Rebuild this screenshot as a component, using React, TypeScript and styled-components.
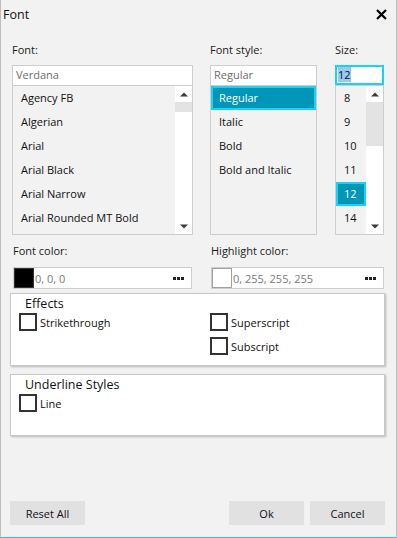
import React from "react";
import styled, { createGlobalStyle, css } from "styled-components";

const GlobalStyle = createGlobalStyle`
  html, body {
    margin: 0;
    padding: 0;
    background: #f2f2f2;
  }
  body {
    font-family: "Open Sans", "Noto Sans", "Liberation Sans", sans-serif;
    color: #1a1a1a;
  }
  * {
    box-sizing: border-box;
  }
`;

const Window = styled.div`
  width: 397px;
  height: 538px;
  background: #f2f2f2;
  border-left: 1px solid #bdbdbd;
  border-right: 1px solid #bdbdbd;
  border-bottom: 1px solid #1cc8ee;
  display: flex;
  flex-direction: column;
`;

const TitleBar = styled.div`
  height: 30px;
  display: flex;
  align-items: center;
  justify-content: space-between;
  padding: 0 9px 2px 2px;
  font-size: 12.5px;
  color: #111;
`;

const CloseButton = styled.button`
  width: 12px;
  height: 12px;
  padding: 0;
  border: none;
  background: transparent;
  display: flex;
  align-items: center;
  justify-content: center;
  cursor: pointer;
`;

const Body = styled.div`
  flex: 1;
  display: flex;
  flex-direction: column;
  padding: 0 11px 0 9px;
`;

const PickerGrid = styled.div`
  display: grid;
  grid-template-columns: 181px 107px 50px;
  column-gap: 17px;
  padding-left: 2px;
`;

const Column = styled.div<{ $shift?: number }>`
  display: flex;
  flex-direction: column;
  margin-left: ${(p) => p.$shift ?? 0}px;
`;

const Label = styled.div`
  height: 35px;
  padding-top: 12px;
  font-size: 11px;
  line-height: 15px;
  color: #1a1a1a;
`;

const TextBox = styled.div<{ $focused?: boolean }>`
  height: 20px;
  background: #fff;
  border: 1px solid #cdcdcd;
  border-bottom: none;
  font-size: 11px;
  line-height: 18px;
  padding-left: 3px;
  color: #6d6d6d;
  ${(p) =>
    p.$focused &&
    css`
      border: 2px solid #1ad2f5;
      padding-left: 1px;
      line-height: 16px;
      color: #111;
    `}
`;

const Selection = styled.span`
  background: #99c9ef;
`;

const List = styled.div`
  height: 150px;
  border: 1px solid #cdcdcd;
  background: #f2f2f2;
  display: flex;
`;

const Items = styled.div`
  flex: 1;
  display: flex;
  flex-direction: column;
`;

const Item = styled.div<{ $selected?: boolean; $indent: number }>`
  height: 24px;
  line-height: 20px;
  font-size: 11px;
  padding-left: ${(p) => p.$indent}px;
  color: #111;
  border: 2px solid transparent;
  white-space: nowrap;
  ${(p) =>
    p.$selected &&
    css`
      background: #0096b8;
      border-color: #1ad2f5;
      color: #fff;
    `}
`;

const ScrollBar = styled.div`
  width: 17px;
  background: #fff;
  display: flex;
  flex-direction: column;
`;

const ScrollArrow = styled.div`
  height: 16px;
  display: flex;
  align-items: center;
  justify-content: center;
`;

const ScrollThumb = styled.div<{ $size: number }>`
  height: ${(p) => p.$size}px;
  background: #e3e3e3;
`;

const ScrollTrack = styled.div`
  flex: 1;
`;

const ColorGrid = styled.div`
  display: grid;
  grid-template-columns: 179px 173px;
  column-gap: 19px;
  padding-left: 3px;
  margin-top: 3px;
`;

const ColorLabel = styled.div`
  height: 29px;
  padding-top: 5px;
  font-size: 11px;
  line-height: 15px;
  color: #1a1a1a;
`;

const ColorField = styled.div`
  height: 22px;
  background: #fff;
  border: 1px solid #cdcdcd;
  display: flex;
  align-items: center;
  font-size: 11px;
  color: #7a7a7a;
`;

const Swatch = styled.div<{ $color: string }>`
  width: 20px;
  height: 20px;
  background: ${(p) => p.$color};
  border: 1px solid ${(p) => (p.$color === "#000" ? "#333" : "#a0a0a0")};
  margin-right: 1px;
`;

const ColorValue = styled.span`
  flex: 1;
`;

const MoreButton = styled.div`
  width: 20px;
  display: flex;
  align-items: center;
  justify-content: center;
  margin-right: 3px;
`;

const Group = styled.div<{ $height: number }>`
  height: ${(p) => p.$height}px;
  background: #fff;
  border: 1px solid #c8c8c8;
  box-shadow: 1px 1px 2px rgba(0, 0, 0, 0.25);
  padding: 1px 8px 0 8px;
`;

const GroupTitle = styled.div`
  font-size: 12.5px;
  line-height: 17px;
  padding-left: 6px;
  color: #111;
`;

const CheckGrid = styled.div`
  display: grid;
  grid-template-columns: 191px 1fr;
  row-gap: 6px;
  margin-top: 1px;
`;

const CheckRow = styled.label`
  display: flex;
  align-items: center;
  gap: 3px;
  font-size: 11px;
  color: #111;
  height: 18px;
`;

const CheckBox = styled.span`
  width: 18px;
  height: 18px;
  border: 2px solid #333;
  background: #fff;
`;

const Spacer = styled.div<{ $h: number }>`
  height: ${(p) => p.$h}px;
`;

const ButtonRow = styled.div`
  display: flex;
  gap: 6px;
  margin-top: auto;
  margin-bottom: 12px;
`;

const Button = styled.button<{ $push?: boolean }>`
  width: 75px;
  height: 24px;
  border: none;
  background: #e1e1e1;
  font-family: inherit;
  font-size: 11px;
  color: #111;
  padding: 0;
  ${(p) =>
    p.$push &&
    css`
      margin-left: auto;
    `}
`;

const UpArrow = () => (
  <svg width="8" height="5" viewBox="0 0 8 5">
    <path d="M0 4.5 L4 0.5 L8 4.5 Z" fill="#3a3a3a" />
  </svg>
);

const DownArrow = () => (
  <svg width="8" height="5" viewBox="0 0 8 5">
    <path d="M0 0.5 L4 4.5 L8 0.5 Z" fill="#3a3a3a" />
  </svg>
);

const Dots = () => (
  <svg width="11" height="3" viewBox="0 0 11 3">
    <rect x="0" y="0" width="3" height="3" fill="#222" />
    <rect x="4" y="0" width="3" height="3" fill="#222" />
    <rect x="8" y="0" width="3" height="3" fill="#222" />
  </svg>
);

const fonts = [
  "Agency FB",
  "Algerian",
  "Arial",
  "Arial Black",
  "Arial Narrow",
  "Arial Rounded MT Bold",
];
const styles = ["Regular", "Italic", "Bold", "Bold and Italic"];
const sizes = ["8", "9", "10", "11", "12", "14"];

const App: React.FC = () => {
  return (
    <>
      <GlobalStyle />
      <Window>
        <TitleBar>
          <span>Font</span>
          <CloseButton aria-label="Close">
            <svg width="11" height="11" viewBox="0 0 11 11">
              <path
                d="M1 1 L10 10 M10 1 L1 10"
                stroke="#000"
                strokeWidth="2.2"
              />
            </svg>
          </CloseButton>
        </TitleBar>
        <Body>
          <PickerGrid>
            <Column>
              <Label>Font:</Label>
              <TextBox>Verdana</TextBox>
              <List>
                <Items>
                  {fonts.map((f) => (
                    <Item key={f} $indent={6}>
                      {f}
                    </Item>
                  ))}
                </Items>
                <ScrollBar>
                  <ScrollArrow>
                    <UpArrow />
                  </ScrollArrow>
                  <ScrollThumb $size={10} />
                  <ScrollTrack />
                  <ScrollArrow>
                    <DownArrow />
                  </ScrollArrow>
                </ScrollBar>
              </List>
            </Column>
            <Column>
              <Label>Font style:</Label>
              <TextBox>Regular</TextBox>
              <List>
                <Items>
                  {styles.map((s, i) => (
                    <Item key={s} $indent={6} $selected={i === 0}>
                      {s}
                    </Item>
                  ))}
                </Items>
              </List>
            </Column>
            <Column $shift={1}>
              <Label>Size:</Label>
              <TextBox $focused>
                <Selection>12</Selection>
              </TextBox>
              <List>
                <Items>
                  {sizes.map((s) => (
                    <Item key={s} $indent={6} $selected={s === "12"}>
                      {s}
                    </Item>
                  ))}
                </Items>
                <ScrollBar>
                  <ScrollArrow>
                    <UpArrow />
                  </ScrollArrow>
                  <ScrollThumb $size={44} />
                  <ScrollTrack />
                  <ScrollArrow>
                    <DownArrow />
                  </ScrollArrow>
                </ScrollBar>
              </List>
            </Column>
          </PickerGrid>

          <ColorGrid>
            <Column>
              <ColorLabel>Font color:</ColorLabel>
              <ColorField>
                <Swatch $color="#000" />
                <ColorValue>0, 0, 0</ColorValue>
                <MoreButton>
                  <Dots />
                </MoreButton>
              </ColorField>
            </Column>
            <Column>
              <ColorLabel>Highlight color:</ColorLabel>
              <ColorField>
                <Swatch $color="#fff" />
                <ColorValue>0, 255, 255, 255</ColorValue>
                <MoreButton>
                  <Dots />
                </MoreButton>
              </ColorField>
            </Column>
          </ColorGrid>

          <Spacer $h={4} />
          <Group $height={73}>
            <GroupTitle>Effects</GroupTitle>
            <CheckGrid>
              <CheckRow>
                <CheckBox />
                Strikethrough
              </CheckRow>
              <CheckRow>
                <CheckBox />
                Superscript
              </CheckRow>
              <span />
              <CheckRow>
                <CheckBox />
                Subscript
              </CheckRow>
            </CheckGrid>
          </Group>

          <Spacer $h={8} />
          <Group $height={62}>
            <GroupTitle>Underline Styles</GroupTitle>
            <CheckGrid>
              <CheckRow>
                <CheckBox />
                Line
              </CheckRow>
            </CheckGrid>
          </Group>

          <ButtonRow>
            <Button>Reset All</Button>
            <Button $push>Ok</Button>
            <Button>Cancel</Button>
          </ButtonRow>
        </Body>
      </Window>
    </>
  );
};

export default App;
